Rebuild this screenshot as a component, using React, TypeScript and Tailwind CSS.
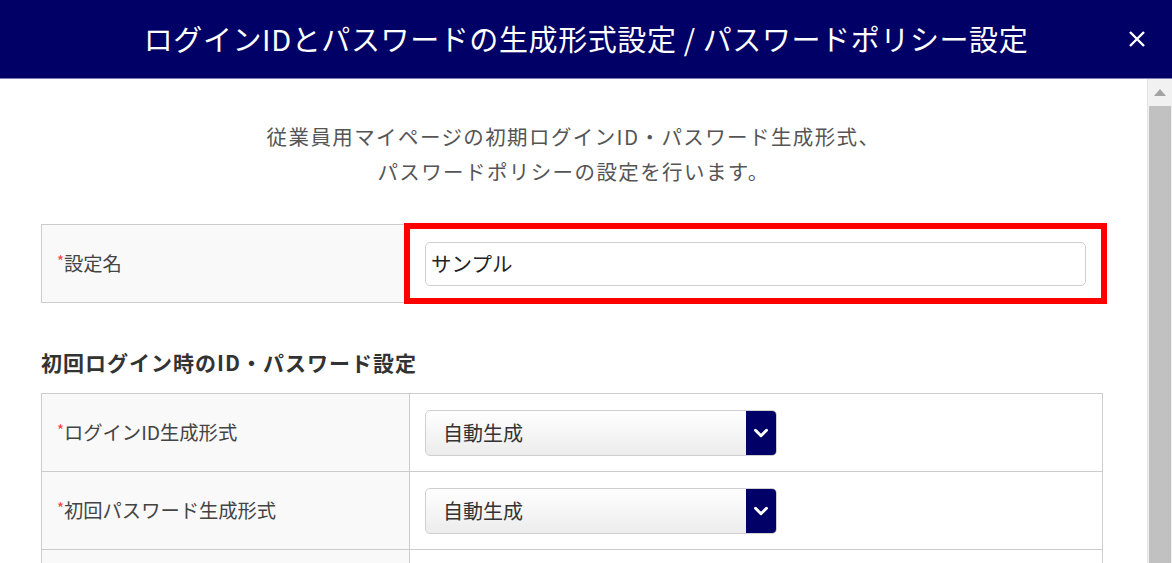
import { ChevronDown } from "lucide-react";

const font = { fontFamily: '"Noto Sans CJK JP", "Noto Sans", sans-serif' };

function Required({ label }: { label: string }) {
  return (
    <span className="text-[19.3px] text-[#444]">
      <span className="relative top-[2px] align-top text-[15px] leading-[20px] text-[#ff3b3b]">*</span>
      {label}
    </span>
  );
}

function SelectBox({ value }: { value: string }) {
  return (
    <div className="flex h-[46px] w-[352px] overflow-hidden rounded-[5px] border border-[#cfcfcf] bg-gradient-to-b from-white to-[#ececec]">
      <div className="flex flex-1 items-center pl-[17px] text-[20px] text-[#333]">{value}</div>
      <div className="flex w-[30px] items-center justify-center bg-[#000066]">
        <ChevronDown size={22} strokeWidth={3.2} color="#ffffff" />
      </div>
    </div>
  );
}

export default function App() {
  return (
    <div className="flex h-[563px] w-full flex-col overflow-hidden bg-white" style={font}>
      <div className="flex h-[79px] shrink-0 items-center border-b border-[#7a7aae] bg-[#000066]">
        <div className="w-[45px] shrink-0" />
        <div className="flex-1 text-center text-[29px] tracking-[0.6px] text-white">
          ログインIDとパスワードの生成形式設定 / パスワードポリシー設定
        </div>
        <button className="mr-[25px] flex h-[20px] w-[20px] shrink-0 items-center justify-center">
          <svg width="18" height="18" viewBox="0 0 18 18">
            <path d="M2 2 L16 16 M16 2 L2 16" stroke="#ffffff" strokeWidth="2.4" />
          </svg>
        </button>
      </div>

      <div className="flex min-h-0 flex-1">
        <div className="flex-1 overflow-hidden">
          <div className="pt-[40px] text-center text-[20.5px] leading-[35px] tracking-[1.4px] text-[#555]">
            <p>従業員用マイページの初期ログインID・パスワード生成形式、</p>
            <p>パスワードポリシーの設定を行います。</p>
          </div>

          <div className="relative ml-[41px] mt-[35px] w-[1062px]">
            <div className="flex h-[79px] border border-[#cccccc]">
              <div className="flex w-[368px] items-center border-r border-[#cccccc] bg-[#f9f9f9] pl-[15px]">
                <Required label="設定名" />
              </div>
              <div className="flex flex-1 items-center pl-[15px] pr-[16px]">
                <div className="flex h-[44px] w-full items-center rounded-[5px] border border-[#cfcfcf] bg-white pl-[5px] text-[20.5px] text-[#222]">
                  サンプル
                </div>
              </div>
            </div>
            <div className="pointer-events-none absolute left-[363px] top-[-1px] h-[81px] w-[703px] border-[6px] border-[#ff0000]" />
          </div>

          <h2 className="ml-[41px] mt-[44px] text-[21px] font-bold leading-[30px] tracking-[1px] text-[#333]">
            初回ログイン時のID・パスワード設定
          </h2>

          <div className="ml-[41px] mt-[16px] w-[1062px] border-l border-r border-t border-[#cccccc]">
            {["ログインID生成形式", "初回パスワード生成形式", ""].map((label, i) => (
              <div key={i} className="flex h-[78px] border-b border-[#cccccc]">
                <div className="flex w-[368px] items-center border-r border-[#cccccc] bg-[#f9f9f9] pl-[15px]">
                  {label && <Required label={label} />}
                </div>
                <div className="flex flex-1 items-center pl-[15px]">
                  {label && <SelectBox value="自動生成" />}
                </div>
              </div>
            ))}
          </div>
        </div>

        <div className="flex w-[25px] shrink-0 flex-col border-l border-[#e4e4e4] bg-[#f1f1f1]">
          <div className="flex h-[27px] items-center justify-center">
            <svg width="12" height="7" viewBox="0 0 12 7">
              <path d="M6 0 L12 7 L0 7 Z" fill="#a3a3a3" />
            </svg>
          </div>
          <div className="ml-[1px] mr-[1px] flex-1 bg-[#c1c1c1]" />
        </div>
      </div>
    </div>
  );
}
